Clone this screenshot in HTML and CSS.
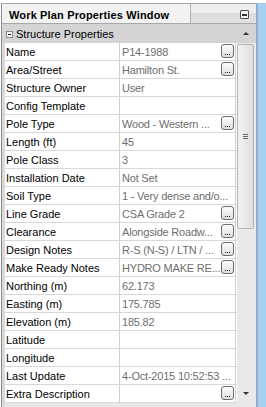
FILE: index.html
```html
<!doctype html>
<html lang="en">
    <head>
        <meta charset="UTF-8" />
        <meta name="viewport" content="width=device-width, initial-scale=1.0" />
        <title>Work Plan Properties Window</title>
        <link rel="stylesheet" href="styles.css">
    </head>
    <body>
        <div class="window">
            <div class="panel">
                <div class="titlebar">
                    <div class="title">Work Plan Properties Window</div>
                    <div class="title-tools">
                        <span class="min-btn"><span class="min-bar"></span></span>
                    </div>
                </div>

                <div class="content">
                    <div class="grid">
                        <div class="category">
                            <span class="toggle"><span class="toggle-bar"></span></span>
                            <span class="category-name">Structure Properties</span>
                        </div>

                        <div class="row"><div class="label">Name</div><div class="value"><span class="text">P14-1988</span><span class="dots"></span></div></div>
                        <div class="row"><div class="label">Area/Street</div><div class="value"><span class="text">Hamilton St.</span><span class="dots"></span></div></div>
                        <div class="row"><div class="label">Structure Owner</div><div class="value"><span class="text">User</span></div></div>
                        <div class="row"><div class="label">Config Template</div><div class="value"><span class="text"></span></div></div>
                        <div class="row"><div class="label">Pole Type</div><div class="value"><span class="text">Wood - Western ...</span><span class="dots"></span></div></div>
                        <div class="row"><div class="label">Length (ft)</div><div class="value"><span class="text">45</span></div></div>
                        <div class="row"><div class="label">Pole Class</div><div class="value"><span class="text">3</span></div></div>
                        <div class="row"><div class="label">Installation Date</div><div class="value"><span class="text">Not Set</span></div></div>
                        <div class="row"><div class="label">Soil Type</div><div class="value"><span class="text">1 - Very dense and/o...</span></div></div>
                        <div class="row"><div class="label">Line Grade</div><div class="value"><span class="text">CSA Grade 2</span><span class="dots"></span></div></div>
                        <div class="row"><div class="label">Clearance</div><div class="value"><span class="text">Alongside Roadw...</span><span class="dots"></span></div></div>
                        <div class="row"><div class="label">Design Notes</div><div class="value"><span class="text">R-S (N-S) / LTN / ...</span><span class="dots"></span></div></div>
                        <div class="row"><div class="label">Make Ready Notes</div><div class="value"><span class="text">HYDRO MAKE RE...</span><span class="dots"></span></div></div>
                        <div class="row"><div class="label">Northing (m)</div><div class="value"><span class="text">62.173</span></div></div>
                        <div class="row"><div class="label">Easting (m)</div><div class="value"><span class="text">175.785</span></div></div>
                        <div class="row"><div class="label">Elevation (m)</div><div class="value"><span class="text">185.82</span></div></div>
                        <div class="row"><div class="label">Latitude</div><div class="value"><span class="text"></span></div></div>
                        <div class="row"><div class="label">Longitude</div><div class="value"><span class="text"></span></div></div>
                        <div class="row"><div class="label">Last Update</div><div class="value"><span class="text">4-Oct-2015 10:52:53 ...</span></div></div>
                        <div class="row"><div class="label">Extra Description</div><div class="value"><span class="text"></span><span class="dots"></span></div></div>
                        <div class="grid-bottom"></div>
                    </div>

                    <div class="scrollbar">
                        <div class="scroll-up"><span class="arrow-up"></span></div>
                        <div class="track">
                            <div class="thumb">
                                <span class="grip"></span>
                            </div>
                        </div>
                        <div class="scroll-down"><span class="arrow-down"></span></div>
                    </div>
                </div>
            </div>
            <div class="edge"></div>
        </div>
    </body>
</html>
```

FILE: styles.css
```css
/* General Styles */
body {
    margin: 0;
    padding: 0;
    background-color: #ffffff;
    font-family: "Liberation Sans", Arial, sans-serif;
    font-size: 11px;
    color: #000;
}

.window {
    display: flex;
    height: 407px;
    padding-top: 3px;
    box-sizing: border-box;
}

.panel {
    display: flex;
    flex-direction: column;
    width: 256px;
    margin-left: 1px;
    box-sizing: border-box;
    border-top: 1px solid #a8a8a8;
    border-left: 1px solid #8c8c8c;
    border-right: 1px solid #a8a8a8;
    background-color: #e6e6e6;
}

.edge {
    flex: 1;
    background-color: #a5d0f2;
    border-left: 1px solid #7fb4e2;
}

/* Title bar */
.titlebar {
    display: flex;
    height: 19px;
    border-bottom: 1px solid #a8a8a8;
    background-color: #f2f2f2;
}

.title {
    width: 189px;
    padding-left: 7px;
    padding-top: 5px;
    box-sizing: border-box;
    border-right: 1px solid #b4b4b4;
    font-weight: bold;
    letter-spacing: 0.15px;
}

.title-tools {
    flex: 1;
    display: flex;
    justify-content: flex-end;
    padding-top: 6px;
    padding-right: 7px;
    background: linear-gradient(to bottom, #eeeeee 0, #eeeeee 9px, #dcdcdc 9px, #e2e2e2 100%);
}

.min-btn {
    display: flex;
    align-items: center;
    justify-content: center;
    width: 9px;
    height: 9px;
    box-sizing: border-box;
    border: 1px solid #4a4a4a;
    border-radius: 1px;
    background-color: #f4f4f4;
}

.min-bar {
    display: block;
    width: 5px;
    height: 2px;
    margin-top: 1px;
    background-color: #303030;
}

/* Grid */
.content {
    flex: 1;
    display: flex;
}

.grid {
    width: 235px;
    display: flex;
    flex-direction: column;
    background-color: #d9d9d9;
}

.category {
    display: flex;
    align-items: center;
    height: 19px;
    padding-left: 4px;
    background-color: #d4d4d4;
}

.toggle {
    display: flex;
    align-items: center;
    justify-content: center;
    width: 7px;
    height: 7px;
    box-sizing: border-box;
    border: 1px solid #8a8a8a;
    background-color: #f8f8f8;
    margin-top: 1px;
}

.toggle-bar {
    display: block;
    width: 3px;
    height: 1px;
    background-color: #222;
}

.category-name {
    margin-left: 3px;
    margin-top: 1px;
}

.row {
    display: flex;
    height: 17px;
    margin-left: 3px;
    border-bottom: 1px solid #d8d8d8;
    background-color: #ffffff;
}

.label {
    width: 115px;
    padding-left: 1px;
    padding-top: 3px;
    box-sizing: border-box;
    border-right: 1px solid #cfcfcf;
    white-space: nowrap;
    overflow: hidden;
}

.value {
    display: flex;
    width: 116px;
    box-sizing: border-box;
    border-right: 1px solid #cfcfcf;
    padding-left: 2px;
}

.value .text {
    flex: 1;
    min-width: 0;
    padding-top: 3px;
    color: #6e6e6e;
    letter-spacing: -0.2px;
    white-space: nowrap;
}

.dots {
    position: relative;
    width: 13px;
    height: 14px;
    margin-top: 1px;
    margin-right: 1px;
    box-sizing: border-box;
    border: 1px solid #6c6c6c;
    border-radius: 3px;
    background: linear-gradient(to bottom, #fcfcfc, #dedede);
}

.dots::after {
    content: "";
    position: absolute;
    left: 3px;
    bottom: 2px;
    width: 1px;
    height: 1px;
    background-color: #222;
    box-shadow: 2px 0 0 #222, 4px 0 0 #222;
}

.grid-bottom {
    flex: 1;
    margin-left: 3px;
    background-color: #e8e8e8;
}

/* Scrollbar */
.scrollbar {
    flex: 1;
    display: flex;
    flex-direction: column;
    background-color: #e9e9e9;
}

.scroll-up {
    display: flex;
    justify-content: center;
    height: 19px;
    padding-top: 8px;
    box-sizing: border-box;
    background-color: #d4d4d4;
    padding-right: 2px;
}

.arrow-up {
    width: 0;
    height: 0;
    border-left: 3px solid transparent;
    border-right: 3px solid transparent;
    border-bottom: 3px solid #333;
}

.track {
    flex: 1;
    padding-top: 1px;
}

.thumb {
    display: flex;
    align-items: center;
    justify-content: center;
    width: 17px;
    height: 185px;
    box-sizing: border-box;
    border: 1px solid #b4b4b4;
    border-radius: 2px;
    background: linear-gradient(to right, #f2f2f2, #dedede);
}

.grip {
    display: block;
    width: 5px;
    height: 1px;
    background-color: #6a6a6a;
    box-shadow: 0 -2px 0 #6a6a6a, 0 2px 0 #6a6a6a;
}

.scroll-down {
    display: flex;
    justify-content: center;
    height: 20px;
    padding-top: 5px;
    box-sizing: border-box;
    padding-right: 2px;
}

.arrow-down {
    width: 0;
    height: 0;
    border-left: 3px solid transparent;
    border-right: 3px solid transparent;
    border-top: 3px solid #333;
}
```
